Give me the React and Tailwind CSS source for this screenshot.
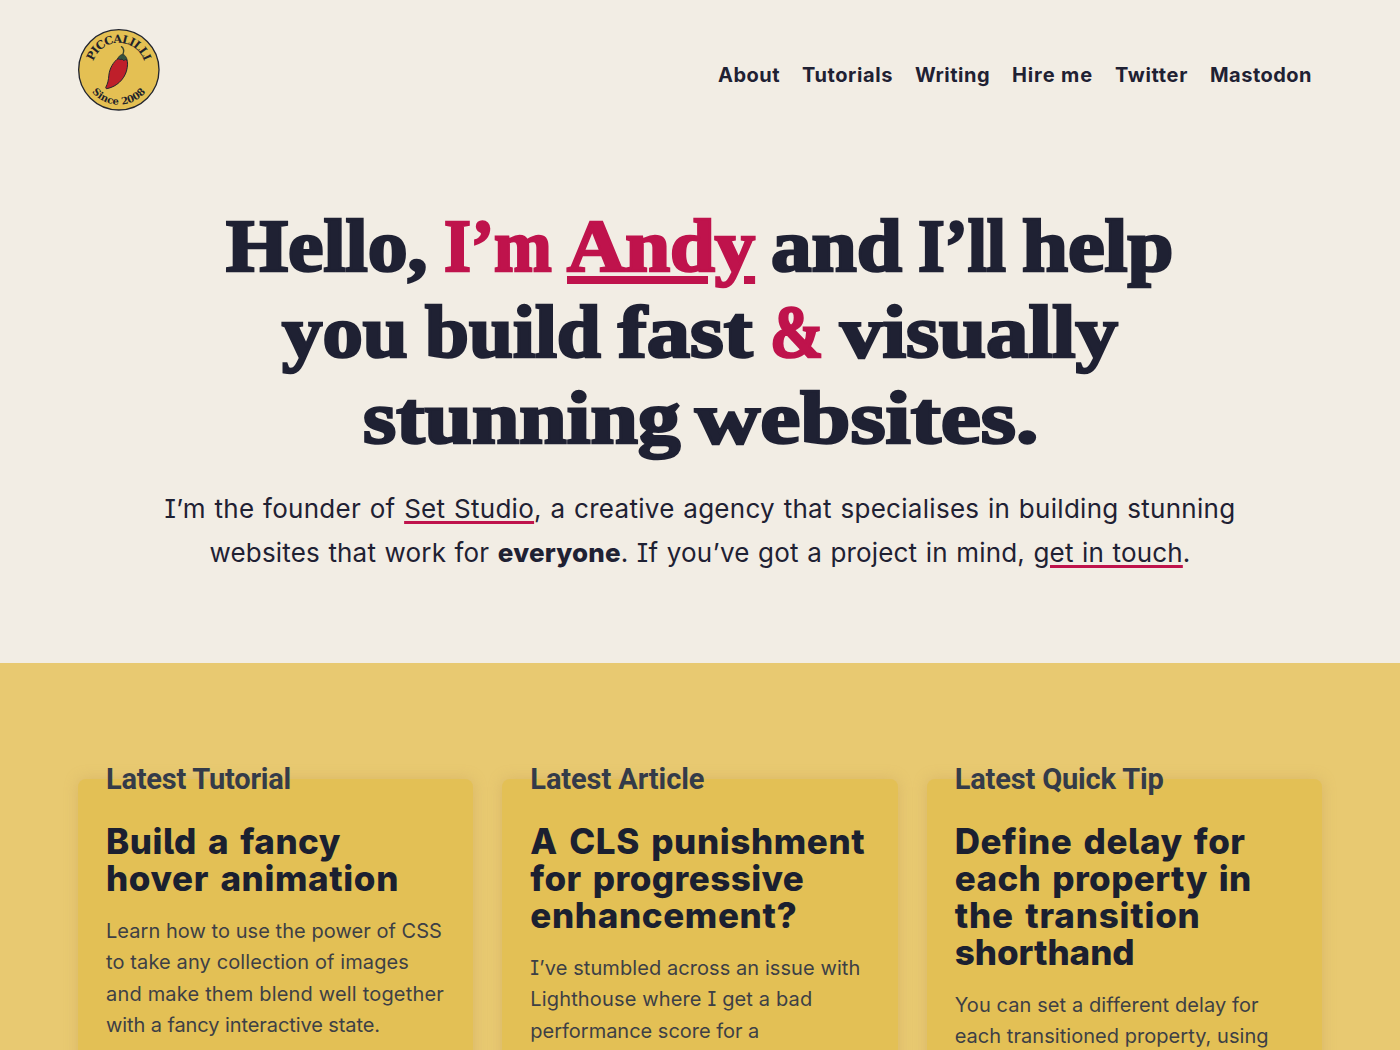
import { useLayoutEffect, useRef, useState } from "react";

// Tracks a run of text so that it fills exactly `width` pixels.
function Fit({ width, className = "", children }) {
  const ref = useRef(null);
  const [tracking, setTracking] = useState(0);
  useLayoutEffect(() => {
    const el = ref.current;
    el.style.letterSpacing = "0px";
    const next = (width - el.getBoundingClientRect().width) / el.textContent.length;
    el.style.letterSpacing = `${next}px`;
    setTracking(next);
  }, [width]);
  return (
    <span
      ref={ref}
      className={`inline-block whitespace-nowrap ${className}`}
      style={{ letterSpacing: `${tracking}px` }}
    >
      {children}
    </span>
  );
}

// Widens the letterforms of a display word so that it fills `width` pixels.
function Wide({ width, className = "", children }) {
  const ref = useRef(null);
  const [scale, setScale] = useState(1);
  useLayoutEffect(() => {
    setScale(width / ref.current.offsetWidth);
  }, [width]);
  return (
    <span className="block text-left whitespace-nowrap" style={{ width: `${width}px` }}>
      <span
        ref={ref}
        className={`inline-block origin-left ${className}`}
        style={{ transform: `scaleX(${scale})` }}
      >
        {children}
      </span>
    </span>
  );
}

function Logo() {
  return (
    <svg viewBox="54 41 247 247" className="mt-px block size-[82px]" role="img" aria-label="Piccalilli">
      <circle cx="177" cy="164" r="121" fill="#e4c053" stroke="#22252e" strokeWidth="4" />
      <path id="logo-top" d="M96 164 A81 81 0 0 1 258 164" fill="none" />
      <path id="logo-bottom" d="M72 164 A105 105 0 0 0 282 164" fill="none" />
      <g fontFamily='"DejaVu Serif", serif' fontWeight="700" fill="#22222a">
        <text fontSize="34" textAnchor="middle">
          <textPath href="#logo-top" startOffset="50%" textLength="202">PICCALILLI</textPath>
        </text>
        <text fontSize="30" textAnchor="middle">
          <textPath href="#logo-bottom" startOffset="50%" textLength="186">Since 2008</textPath>
        </text>
      </g>
      <path
        d="M177 128 C160 140 149 160 147 180 C146 195 143 207 138 216 C137 220 139 222 144 220 C170 214 192 194 200 168 C204 152 205 140 200 131 C193 134 184 134 177 128 Z"
        fill="#bf1f2a"
        stroke="#22252e"
        strokeWidth="3"
      />
      <path
        d="M173 132 C176 123 182 119 188 117 C196 119 201 126 202 136 C198 132 195 133 192 137 C188 131 184 130 181 134 C179 131 176 131 173 132 Z"
        fill="#38543f"
        stroke="#22252e"
        strokeWidth="2"
      />
      <path d="M189 119 C193 108 191 98 185 94" fill="none" stroke="#38442f" strokeWidth="4" strokeLinecap="round" />
    </svg>
  );
}

const nav = [
  ["About", 62],
  ["Tutorials", 91],
  ["Writing", 75],
  ["Hire me", 81],
  ["Twitter", 73],
  ["Mastodon", 102],
];

const cards = [
  {
    label: ["Latest Tutorial", 185],
    title: [["Build a fancy", 235], ["hover animation", 293]],
    body: [
      ["Learn how to use the power of CSS", 336],
      ["to take any collection of images", 303],
      ["and make them blend well together", 338],
      ["with a fancy interactive state.", 274],
    ],
  },
  {
    label: ["Latest Article", 174],
    title: [["A CLS punishment", 335], ["for progressive", 274], ["enhancement?", 267]],
    body: [
      ["I’ve stumbled across an issue with", 330],
      ["Lighthouse where I get a bad", 282],
      ["performance score for a", 229],
    ],
  },
  {
    label: ["Latest Quick Tip", 209],
    title: [["Define delay for", 291], ["each property in", 297], ["the transition", 246], ["shorthand", 180]],
    body: [
      ["You can set a different delay for", 304],
      ["each transitioned property, using", 314],
    ],
  },
];

function Card({ label, title, body }) {
  return (
    <article className="h-[420px] rounded-lg bg-[#e3c055] px-[28px] shadow-[0_0_14px_rgba(190,150,90,0.35)]">
      <p className="-mt-4 font-[Roboto,sans-serif] text-[29px] leading-8 font-bold text-[#343b49]">
        <Fit width={label[1]}>{label[0]}</Fit>
      </p>
      <h2 className="mt-7 text-[35px] leading-[37px] font-extrabold [word-spacing:3px] text-[#1b2030] [font-feature-settings:'cv05','cv08']">
        {title.map(([text, width]) => (
          <Fit key={text} width={width} className="!block w-max">{text}</Fit>
        ))}
      </h2>
      <p className="mt-[19px] text-[20px] leading-[31.4px] text-[#3d3f45]">
        {body.map(([text, width]) => (
          <Fit key={text} width={width} className="!block w-max">{text}</Fit>
        ))}
      </p>
    </article>
  );
}

export default function App() {
  return (
    <div className="flex h-[1050px] flex-col overflow-hidden bg-[#f2ede4] font-[Inter,sans-serif] text-[#1f2133] [font-feature-settings:'cv08']">
      <header className="flex h-[203px] shrink-0 items-start justify-between pt-7 pr-[88px] pl-[78px]">
        <Logo />
        <nav className="mt-[35px] flex gap-[22px] text-[20px] leading-6 font-bold">
          {nav.map(([text, width]) => (
            <a key={text} href="#">
              <Fit width={width}>{text}</Fit>
            </a>
          ))}
        </nav>
      </header>

      <main className="flex flex-1 flex-col">
        <section className="h-[460px] shrink-0 text-center">
          <h1 className="font-['Liberation_Serif',serif] text-[75px] leading-[86px] font-bold [-webkit-text-stroke:2.6px_currentColor]">
            <span className="flex justify-center gap-4">
              <Wide width={202}>Hello,</Wide>
              <span className="flex gap-[15px] text-[#bf134c]">
                <Wide width={108}>I’m</Wide>
                <Wide width={188} className="underline decoration-[8px] underline-offset-[5px]">Andy</Wide>
              </span>
              <Wide width={131}>and</Wide>
              <Wide width={88}>I’ll</Wide>
              <Wide width={152}>help</Wide>
            </span>
            <span className="flex justify-center gap-[17px]">
              <Wide width={126}>you</Wide>
              <Wide width={176}>build</Wide>
              <Wide width={135}>fast</Wide>
              <Wide width={53} className="text-[#bf134c]">&amp;</Wide>
              <Wide width={278}>visually</Wide>
            </span>
            <span className="flex justify-center gap-[15px]">
              <Wide width={317}>stunning</Wide>
              <Wide width={343}>websites.</Wide>
            </span>
          </h1>
          <p className="mt-[26px] text-[26px] leading-[44px] [word-spacing:1px]">
            <Fit width={1071}>
              I’m the founder of{" "}
              <a href="#" className="underline decoration-[#bf134c] decoration-[2.5px] underline-offset-[3px]">Set Studio</a>
              , a creative agency that specialises in building stunning
            </Fit>
            <br />
            <Fit width={981}>
              websites that work for <strong className="font-extrabold">everyone</strong>. If you’ve got a project in mind,{" "}
              <a href="#" className="underline decoration-[#bf134c] decoration-[2.5px] underline-offset-[3px]">get in touch</a>.
            </Fit>
          </p>
        </section>

        <section className="flex-1 bg-[#e8c971] px-[78px] pt-[116px]">
          <div className="grid grid-cols-3 gap-[29px]">
            {cards.map((card) => (
              <Card key={card.label[0]} {...card} />
            ))}
          </div>
        </section>
      </main>
    </div>
  );
}
